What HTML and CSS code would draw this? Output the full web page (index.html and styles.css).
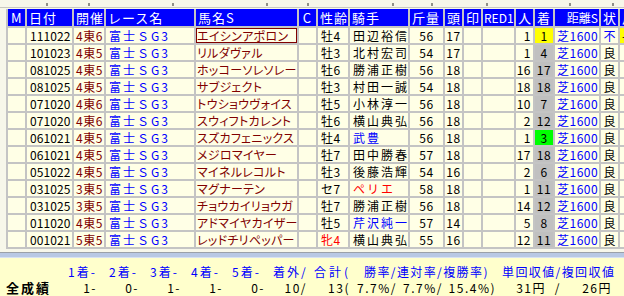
FILE: index.html
```html
<!DOCTYPE html>
<html lang="ja">
<head>
<meta charset="utf-8">
<title>富士S 成績</title>
<link rel="stylesheet" href="styles.css">
</head>
<body>
<div class="app">
  <div class="ruler">
    <svg width="624" height="9" viewBox="0 0 624 9">
      <rect x="0" y="7" width="624" height="1" fill="#c8c8c0"/>
      <rect x="46" y="3" width="2" height="3" fill="#909088"/>
      <rect x="88" y="3" width="2" height="3" fill="#909088"/>
      <rect x="172" y="3" width="2" height="3" fill="#909088"/>
      <rect x="266" y="3" width="2" height="3" fill="#909088"/>
      <rect x="307" y="3" width="2" height="3" fill="#909088"/>
      <rect x="392" y="3" width="2" height="3" fill="#909088"/>
      <rect x="431" y="3" width="2" height="3" fill="#909088"/>
      <rect x="486" y="3" width="2" height="3" fill="#909088"/>
      <rect x="569" y="3" width="2" height="3" fill="#909088"/>
      <rect x="612" y="3" width="2" height="3" fill="#909088"/>
    </svg>
  </div>
  <div class="gridwrap">
    <div class="grid">
      <div class="h hm">M</div><div class="h">日付</div><div class="h">開催</div><div class="h">レース名</div><div class="h">馬名S</div><div class="h hc">C</div><div class="h">性齢</div><div class="h">騎手</div><div class="h">斤量</div><div class="h">頭</div><div class="h">印</div><div class="h hred">RED1</div><div class="h">人</div><div class="h">着</div><div class="h hr">距離S</div><div class="h">状</div><div class="h">斤</div>

      <div class="c"></div><div class="d">111022</div><div class="k">4東6</div><div class="r">富士ＳG3</div><div class="n sel">エイシンアポロン</div><div class="c"></div><div class="s">牡4</div><div class="j">田辺裕信</div><div class="w">56</div><div class="t">17</div><div class="c"></div><div class="c"></div><div class="p">1</div><div class="f win">1</div><div class="z">芝1600</div><div class="g blue">不</div><div class="x ylw">-</div>

      <div class="c"></div><div class="d">101023</div><div class="k">4東5</div><div class="r">富士ＳG3</div><div class="n">リルダヴァル</div><div class="c"></div><div class="s">牡3</div><div class="j">北村宏司</div><div class="w">54</div><div class="t">17</div><div class="c"></div><div class="c"></div><div class="p">1</div><div class="f">4</div><div class="z">芝1600</div><div class="g">良</div><div class="x"></div>

      <div class="c"></div><div class="d">081025</div><div class="k">4東5</div><div class="r">富士ＳG3</div><div class="n">ホッコーソレソレー</div><div class="c"></div><div class="s">牡6</div><div class="j">勝浦正樹</div><div class="w">56</div><div class="t">18</div><div class="c"></div><div class="c"></div><div class="p">16</div><div class="f">17</div><div class="z">芝1600</div><div class="g">良</div><div class="x"></div>

      <div class="c"></div><div class="d">081025</div><div class="k">4東5</div><div class="r">富士ＳG3</div><div class="n">サブジェクト</div><div class="c"></div><div class="s">牡3</div><div class="j">村田一誠</div><div class="w">54</div><div class="t">18</div><div class="c"></div><div class="c"></div><div class="p">18</div><div class="f">18</div><div class="z">芝1600</div><div class="g">良</div><div class="x"></div>

      <div class="c"></div><div class="d">071020</div><div class="k">4東6</div><div class="r">富士ＳG3</div><div class="n">トウショウヴォイス</div><div class="c"></div><div class="s">牡5</div><div class="j">小林淳一</div><div class="w">56</div><div class="t">18</div><div class="c"></div><div class="c"></div><div class="p">10</div><div class="f">7</div><div class="z">芝1600</div><div class="g">良</div><div class="x"></div>

      <div class="c"></div><div class="d">071020</div><div class="k">4東6</div><div class="r">富士ＳG3</div><div class="n">スウィフトカレント</div><div class="c"></div><div class="s">牡6</div><div class="j">横山典弘</div><div class="w">56</div><div class="t">18</div><div class="c"></div><div class="c"></div><div class="p">2</div><div class="f">12</div><div class="z">芝1600</div><div class="g">良</div><div class="x"></div>

      <div class="c"></div><div class="d">061021</div><div class="k">4東5</div><div class="r">富士ＳG3</div><div class="n">スズカフェニックス</div><div class="c"></div><div class="s">牡4</div><div class="j blue">武豊</div><div class="w">56</div><div class="t">18</div><div class="c"></div><div class="c"></div><div class="p">1</div><div class="f third">3</div><div class="z">芝1600</div><div class="g">良</div><div class="x"></div>

      <div class="c"></div><div class="d">061021</div><div class="k">4東5</div><div class="r">富士ＳG3</div><div class="n">メジロマイヤー</div><div class="c"></div><div class="s">牡7</div><div class="j">田中勝春</div><div class="w">57</div><div class="t">18</div><div class="c"></div><div class="c"></div><div class="p">17</div><div class="f">18</div><div class="z">芝1600</div><div class="g">良</div><div class="x"></div>

      <div class="c"></div><div class="d">051022</div><div class="k">4東5</div><div class="r">富士ＳG3</div><div class="n">マイネルレコルト</div><div class="c"></div><div class="s">牡3</div><div class="j">後藤浩輝</div><div class="w">54</div><div class="t">16</div><div class="c"></div><div class="c"></div><div class="p">2</div><div class="f">6</div><div class="z">芝1600</div><div class="g">良</div><div class="x"></div>

      <div class="c"></div><div class="d">031025</div><div class="k">3東5</div><div class="r">富士ＳG3</div><div class="n">マグナーテン</div><div class="c"></div><div class="s">セ7</div><div class="j red">ペリエ</div><div class="w">58</div><div class="t">18</div><div class="c"></div><div class="c"></div><div class="p">1</div><div class="f">11</div><div class="z">芝1600</div><div class="g">良</div><div class="x"></div>

      <div class="c"></div><div class="d">031025</div><div class="k">3東5</div><div class="r">富士ＳG3</div><div class="n">チョウカイリョウガ</div><div class="c"></div><div class="s">牡7</div><div class="j">勝浦正樹</div><div class="w">56</div><div class="t">18</div><div class="c"></div><div class="c"></div><div class="p">14</div><div class="f">12</div><div class="z">芝1600</div><div class="g">良</div><div class="x"></div>

      <div class="c"></div><div class="d">011020</div><div class="k">4東5</div><div class="r">富士ＳG3</div><div class="n">アドマイヤカイザー</div><div class="c"></div><div class="s">牡5</div><div class="j blue">芹沢純一</div><div class="w">57</div><div class="t">14</div><div class="c"></div><div class="c"></div><div class="p">5</div><div class="f">8</div><div class="z">芝1600</div><div class="g">良</div><div class="x"></div>

      <div class="c"></div><div class="d">001021</div><div class="k">5東5</div><div class="r">富士ＳG3</div><div class="n">レッドチリペッパー</div><div class="c"></div><div class="s red">牝4</div><div class="j">横山典弘</div><div class="w">55</div><div class="t">16</div><div class="c"></div><div class="c"></div><div class="p">12</div><div class="f">11</div><div class="z">芝1600</div><div class="g">良</div><div class="x"></div>
    </div>
  </div>
  <div class="gap"></div>
  <div class="splitter"></div>
  <div class="footer">
    <div class="frow heads">
      <span class="fl"></span>
      <span class="fh">1着-</span><span class="fh">2着-</span><span class="fh">3着-</span><span class="fh">4着-</span><span class="fh">5着-</span><span class="fh">着外/</span>
      <span class="fsum">合計(</span><span class="frate">勝率/連対率/複勝率)</span><span class="fret">単回収値/複回収値</span>
    </div>
    <div class="frow vals">
      <span class="fl lbl">全成績</span>
      <span class="fv">1-</span><span class="fv">0-</span><span class="fv">1-</span><span class="fv">1-</span><span class="fv">0-</span><span class="fv">10/</span>
      <span class="fv2">13(</span><span class="fv3">7.7%/</span><span class="fv3">7.7%/</span><span class="fv4">15.4%)</span>
      <span class="fv5">31円</span><span class="fv6">/</span><span class="fv7">26円</span>
    </div>
  </div>
</div>
</body>
</html>
```

FILE: styles.css
```css
* { box-sizing: border-box; }
html, body { margin: 0; padding: 0; }
body {
  width: 624px;
  height: 296px;
  overflow: hidden;
  background: #f7f7ea;
  font-family: "Noto Sans CJK JP", "Noto Sans", sans-serif;
  font-size: 12px;
  color: #000;
}
.app { width: 624px; height: 296px; display: flex; flex-direction: column; overflow: hidden; }
.ruler { height: 9px; line-height: 0; flex: none; }
.ruler svg { display: block; }

.gridwrap {
  flex: none;
  padding-left: 6px;
  width: 624px;
  overflow: hidden;
}
.grid {
  display: grid;
  grid-template-columns: 17px 45px 30px 88px 101px 17px 30px 58px 33px 17px 17px 31px 17px 18px 44px 17px 40px;
  grid-template-rows: 17px;
  grid-auto-rows: 15px;
  gap: 2px;
  padding: 0 0 2px 2px;
  background: #c4c4c4;
  width: 680px;
}
.grid > div {
  background: #ffffe6;
  line-height: 15px;
  white-space: nowrap;
  overflow: hidden;
}
.grid > .h {
  background: #0000ff;
  color: #fff;
  line-height: 17px;
  padding-left: 2px;
  letter-spacing: 1px;
  font-size: 13px;
}
.grid > .hm { padding-left: 3px; }
.grid > .hc { text-align: center; padding-left: 0; }
.grid > .hr { text-align: right; padding-right: 1px; letter-spacing: 0; font-size: 12px; }
.grid > .hred { font-size: 12px; letter-spacing: 0; padding-left: 1px; }

.d { padding-left: 3px; letter-spacing: 0.1px; }
.k { color: #800000; padding-left: 2px; letter-spacing: 0.5px; }
.r { color: #0000ff; padding-left: 3px; letter-spacing: 2px; }
.n { color: #800000; padding-left: 1px; font-feature-settings: "palt" 1; letter-spacing: 0.3px; }
.sel { box-shadow: inset 0 0 0 1px #800000; }
.s { padding-left: 3px; letter-spacing: 0.5px; }
.j { padding-left: 3px; letter-spacing: 2px; }
.w, .t { text-align: center; letter-spacing: 0.5px; }
.p { text-align: right; padding-right: 2px; letter-spacing: 0.5px; }
.grid > .f { background: #c0c0c0; text-align: center; letter-spacing: 0.5px; }
.grid > .win { background: #ffff00; }
.grid > .third { background: #00ff00; }
.z { color: #0000ff; padding-left: 2px; letter-spacing: 0.5px; }
.g { text-align: center; }
.grid > .ylw { background: #ffff00; padding-left: 2px; }
.blue { color: #0000ff; }
.red { color: #ff0000; }

.gap { height: 3px; flex: none; }
.splitter {
  height: 6px;
  flex: none;
  border-top: 1px solid #9aa0a8;
  background: #b8c8e4;
  border-bottom: 1px solid #d8e2f2;
}
.footer {
  flex: 1;
  background: #ffffcc;
  padding-top: 6px;
}
.frow { display: flex; white-space: nowrap; }
.heads { color: #0000ff; line-height: 15px; }
.vals { line-height: 16px; margin-top: 1px; }
.fl { width: 68px; flex: none; }
.lbl { padding-left: 6px; font-weight: bold; letter-spacing: 2px; font-size: 13px; }
.fh { width: 41px; flex: none; letter-spacing: 2px; }
.fsum { width: 50px; flex: none; letter-spacing: 3px; }
.frate { width: 138px; flex: none; letter-spacing: 1.4px; }
.fret { flex: none; letter-spacing: 1.4px; }
.vals .fl { width: 62px; }
.fv { width: 42px; flex: none; text-align: right; padding-right: 7px; letter-spacing: 1.5px; }
.fv2 { width: 40px; flex: none; text-align: right; padding-right: 4px; letter-spacing: 1.5px; }
.fv3 { width: 46px; flex: none; text-align: right; padding-right: 3px; letter-spacing: 1.5px; }
.fv4 { width: 52px; flex: none; text-align: right; padding-right: 2px; letter-spacing: 1.5px; }
.fv5 { width: 50px; flex: none; text-align: right; padding-right: 2px; letter-spacing: 1.5px; }
.fv6 { width: 18px; flex: none; text-align: center; }
.fv7 { width: 46px; flex: none; text-align: right; letter-spacing: 1.5px; }
```
